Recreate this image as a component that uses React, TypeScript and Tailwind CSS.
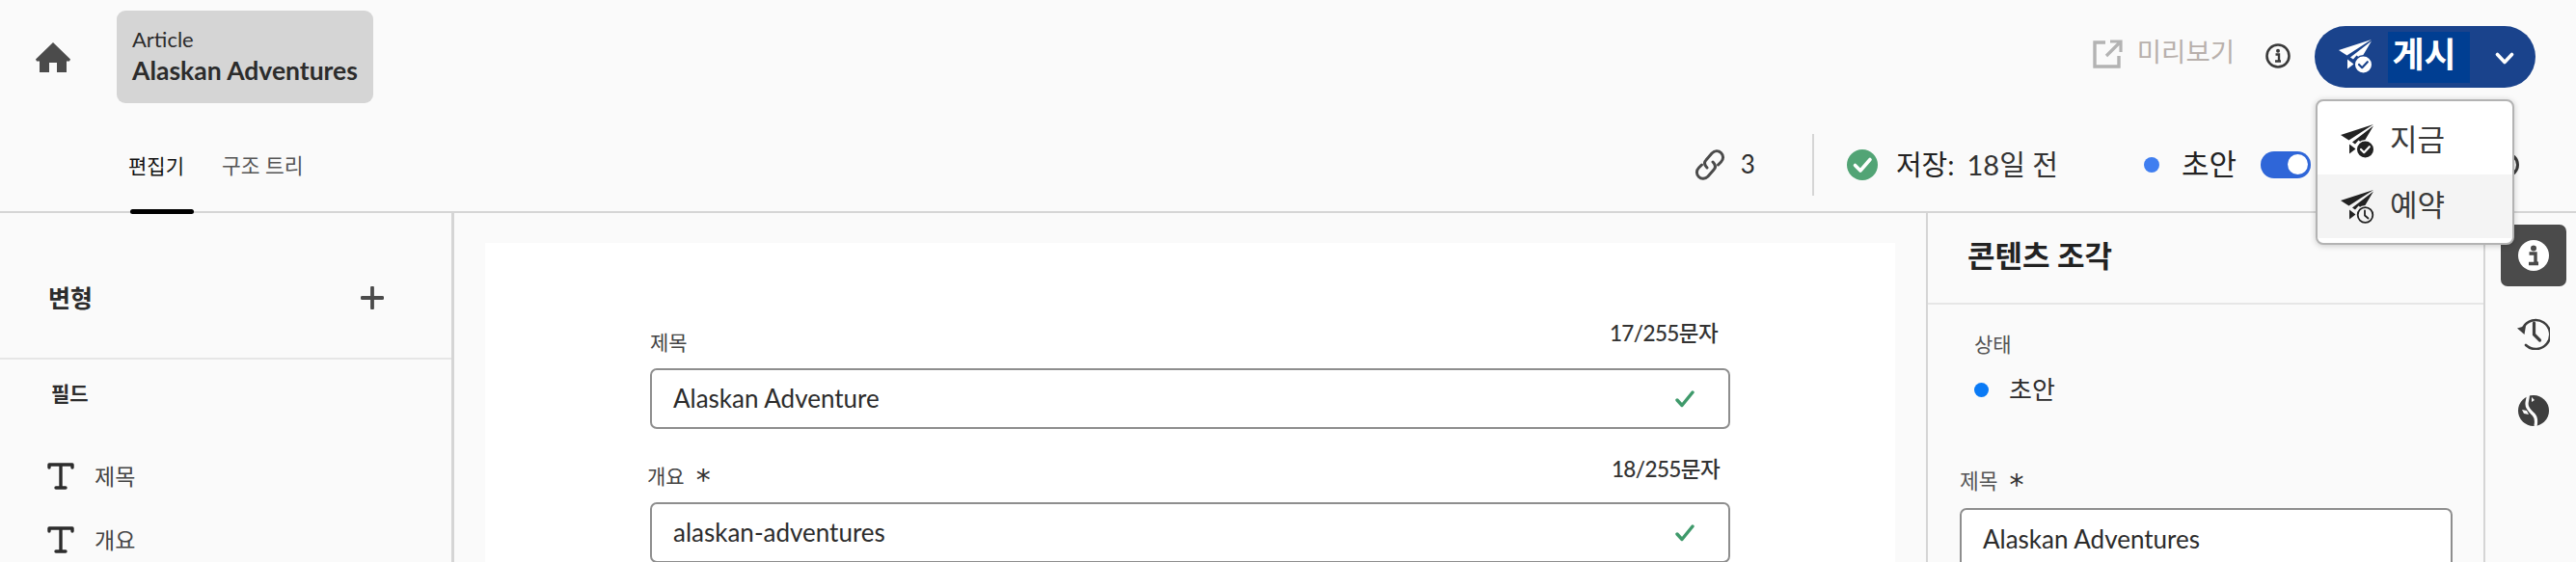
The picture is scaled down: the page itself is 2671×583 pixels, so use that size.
import React from "react";

const KR = "font-['Lato','Noto_Sans_CJK_KR',sans-serif]";

function Plane({ badge, color, bg }: { badge: "check" | "clock"; color: string; bg: string }) {
  return (
    <svg width="36" height="36" viewBox="0 0 36 36">
      <path d="M0 11 34 0 8.500 16.500z" fill={color} />
      <path d="M12 18.500 34 1.500 23 20 18.500 16.500 15 20.500z" fill={color} />
      <path d="M9 20.500 15.500 25.500 9 30.500z" fill={color} />
      {badge === "check" ? (
        <g>
          <circle cx="25.5" cy="26" r="10" fill={bg} />
          <circle cx="25.5" cy="26" r="8.5" fill={color} />
          <path d="M21 26l3.200 3.200 5.600-6" fill="none" stroke={bg} strokeWidth="2.200" strokeLinecap="round" strokeLinejoin="round" />
        </g>
      ) : (
        <g>
          <circle cx="25.5" cy="26" r="10" fill={bg} />
          <circle cx="25.5" cy="26" r="7.800" fill="none" stroke={color} strokeWidth="1.800" />
          <path d="M25 21.500v5l3.500 3" fill="none" stroke={color} strokeWidth="1.800" strokeLinecap="round" />
        </g>
      )}
    </svg>
  );
}

function TIcon() {
  return (
    <svg width="28" height="28" viewBox="0 0 28 28" className="shrink-0">
      <path d="M2 5V2h24v3M14 2v24M9 26h10" fill="none" stroke="#2c2c2c" strokeWidth="3.400" strokeLinecap="round" strokeLinejoin="round" />
    </svg>
  );
}

function Check() {
  return (
    <svg width="20" height="18" viewBox="0 0 20 18" className="shrink-0">
      <path d="M2 10l5 5.500L18 2" fill="none" stroke="#3f9a6b" strokeWidth="3.400" strokeLinecap="round" strokeLinejoin="round" />
    </svg>
  );
}

function Star() {
  return <span className="ml-[12px] text-[30px] leading-[24px] text-[#333] font-['DejaVu_Sans'] translate-y-[4px]">*</span>;
}

function Field({ label, star, count, value, countClass, labelClass }: { label: string; star?: boolean; count: string; value: string; countClass: string; labelClass: string }) {
  return (
    <div className="flex flex-col w-[1120px]">
      <div className="flex items-end justify-between h-[39px] pb-[15px]">
        <span className={`flex items-center text-[21px] leading-[24px] text-[#444] ${labelClass}`}>
          {label}
          {star && <Star />}
        </span>
        <span className={`text-[22.500px] leading-[24px] text-[#333] font-medium tracking-[-0.6px] ${countClass}`}>{count}</span>
      </div>
      <div className="h-[63px] border-2 border-[#8e8e8e] rounded-[7px] bg-white flex items-center justify-between pl-[22px] pr-[35px]">
        <span className="text-[26px] text-[#2c2c2c]">{value}</span>
        <Check />
      </div>
    </div>
  );
}

export default function App() {
  return (
    <div className={`relative w-[2671px] h-[583px] overflow-hidden bg-[#fafafa] flex flex-col ${KR}`}>
      {/* Top row */}
      <div className="h-[118px] shrink-0 flex items-start">
        <button className="ml-[37px] mt-[44px] w-[36px] h-[31px] shrink-0">
          <svg width="36" height="31" viewBox="0 0 36 31">
            <path d="M18 0 36 17.500 35 19.500H32V31H22V21H14V31H4V19.500H1L0 17.500z" fill="#4b4b4b" strokeLinejoin="round" />
          </svg>
        </button>
        <div className="ml-[48px] mt-[11px] w-[266px] h-[96px] rounded-[9px] bg-[#d5d5d5] flex flex-col justify-center pl-[16px] pb-[2px]">
          <div className="text-[22px] leading-[30px] text-[#2c2c2c]">Article</div>
          <div className="text-[26.500px] leading-[34px] font-bold text-[#2c2c2c] whitespace-nowrap">Alaskan Adventures</div>
        </div>
        <div className="ml-auto flex items-start">
          <div className="mt-[41px] flex items-center text-[#b3b3b3]">
            <svg width="31" height="30" viewBox="0 0 31 30">
              <path d="M13 3H2v25h25V17" fill="none" stroke="#b3b3b3" strokeWidth="3.400" />
              <path d="M14 17 28 3M18 2h11v11" fill="none" stroke="#b3b3b3" strokeWidth="3.200" />
            </svg>
            <span className="ml-[15px] text-[27.500px] leading-[28px] text-[#b8b0ac] -mt-[4px]">미리보기</span>
          </div>
          <svg className="ml-[32px] mt-[45px]" width="26" height="26" viewBox="0 0 26 26">
            <circle cx="13" cy="13" r="11.500" fill="none" stroke="#3a3a3a" strokeWidth="2.600" />
            <circle cx="13" cy="7.800" r="2" fill="#3a3a3a" />
            <path d="M10.500 11.500H14v7h2M10 18.500h6" fill="none" stroke="#3a3a3a" strokeWidth="2.400" />
          </svg>
          <div className="ml-[25px] mr-[42px] mt-[27px] w-[229px] h-[64px] rounded-full bg-[#1a438c] flex items-center pl-[25px]">
            <Plane badge="check" color="#ffffff" bg="#1a438c" />
            <span className="ml-[15px] w-[85px] h-[53px] bg-[#003e92] text-white text-[36px] leading-[46px] font-bold text-center pr-[10px]">게시</span>
            <svg className="ml-[26px] mt-[2px]" width="20" height="13" viewBox="0 0 20 13">
              <path d="M2.500 2.500 10 10.500 17.500 2.500" fill="none" stroke="#fff" strokeWidth="3.600" strokeLinecap="round" strokeLinejoin="round" />
            </svg>
          </div>
        </div>
      </div>

      {/* Tabs row */}
      <div className="h-[103px] shrink-0 border-b-2 border-[#d5d5d5] flex items-stretch">
        <div className="ml-[133px] relative flex">
          <div className="w-[68px] pt-[36px] text-[21px] leading-[36px] text-[#111] whitespace-nowrap">편집기</div>
          <div className="absolute left-[2px] bottom-[-3px] w-[66px] h-[5px] rounded-full bg-black" />
          <div className="ml-[29px] pt-[36px] text-[21.500px] leading-[36px] text-[#555]">구조 트리</div>
        </div>
        <div className="ml-auto flex items-center pt-[4px]">
          <svg width="34" height="34" viewBox="0 0 34 34">
            <g fill="none" stroke="#4b4b4b" strokeWidth="3" strokeLinecap="round">
              <path d="M14 20c-3-3-3-6-1-8l6-7c3-3 7-3 9.500-.5s3 6.500 0 9.500l-3 3" />
              <path d="M20 14c3 3 3 6 1 8l-6 7c-3 3-7 3-9.500.5s-3-6.500 0-9.500l3-3" />
            </g>
          </svg>
          <span className="ml-[15px] text-[26px] text-[#2c2c2c]">3</span>
          <div className="ml-[59px] w-[2px] h-[64px] bg-[#d5d5d5]" />
          <svg className="ml-[34px]" width="32" height="32" viewBox="0 0 32 32">
            <circle cx="16" cy="16" r="16" fill="#52a475" />
            <path d="M8.500 16.500 14 22 24 10.500" fill="none" stroke="#fff" strokeWidth="3.600" strokeLinecap="round" strokeLinejoin="round" />
          </svg>
          <span className="ml-[19px] text-[29px] text-[#222]">저장:</span>
          <span className="ml-[13px] text-[29px] text-[#333]">18일 전</span>
          <div className="ml-[89px] w-[16px] h-[16px] rounded-full bg-[#3f7ef0]" />
          <span className="ml-[23px] text-[31px] text-[#222]">초안</span>
          <div className="ml-[25px] w-[52px] h-[28px] rounded-full bg-[#2f66d8] flex items-center justify-end pr-[3px]">
            <div className="w-[21px] h-[21px] rounded-full bg-white" />
          </div>
          <div className="ml-[190px] mr-[59px] w-[26px] h-[26px] rounded-full border-[3px] border-[#3a3a3a]" />
        </div>
      </div>

      {/* Body */}
      <div className="flex-1 flex min-h-0">
        <aside className="w-[471px] shrink-0 border-r-[3px] border-[#d5d5d5] flex flex-col">
          <div className="h-[152px] shrink-0 border-b-2 border-[#e6e6e6] flex items-start justify-between pl-[50px] pr-[70px] pt-[71px]">
            <span className="text-[25px] leading-[34px] font-bold text-[#2c2c2c]">변형</span>
            <svg className="mt-[5px]" width="24" height="24" viewBox="0 0 24 24">
              <path d="M12 1.500v21M1.500 12h21" stroke="#4b4b4b" strokeWidth="3.800" strokeLinecap="round" />
            </svg>
          </div>
          <div className="pl-[53px] pt-[21px] text-[21px] leading-[28px] font-bold text-[#2c2c2c]">필드</div>
          <div className="pl-[49px] pt-[58px] flex flex-col gap-[38px]">
            <div className="h-[28px] flex items-center gap-[21px] text-[23px] leading-[28px] text-[#444]"><TIcon /><span>제목</span></div>
            <div className="h-[28px] flex items-center gap-[21px] text-[23px] leading-[28px] text-[#444]"><TIcon /><span>개요</span></div>
          </div>
        </aside>
        <main className="flex-1 min-w-0 pt-[31px] pl-[32px] pr-[32px]">
          <div className="h-full bg-white pl-[171px] pt-[91px] flex flex-col gap-[37px]">
            <Field label="제목" count="17/255문자" value="Alaskan Adventure" countClass="mr-[13px] -translate-y-[9px]" labelClass="" />
            <Field label="개요" star count="18/255문자" value="alaskan-adventures" countClass="mr-[11px] -translate-y-[7px]" labelClass="-ml-[3px]" />
          </div>
        </main>
        <aside className="w-[580px] shrink-0 border-l-[2px] border-r-[2px] border-[#d5d5d5] flex flex-col">
          <div className="h-[95px] shrink-0 border-b-[2px] border-[#e6e6e6] pl-[41px] pt-[23px] text-[31px] leading-[42px] font-bold text-[#222]">콘텐츠 조각</div>
          <div className="pl-[48px] pt-[27px] text-[21px] leading-[28px] text-[#555]">상태</div>
          <div className="pl-[48px] pt-[17px] flex items-center">
            <div className="w-[15px] h-[15px] rounded-full bg-[#0a7af5]" />
            <span className="ml-[21px] text-[26px] leading-[32px] text-[#2c2c2c]">초안</span>
          </div>
          <div className="pl-[33px] pt-[65px] text-[21.500px] leading-[28px] text-[#555] flex items-center">
            제목<Star />
          </div>
          <div className="ml-[33px] mt-[14px] w-[511px] h-[63px] shrink-0 border-2 border-[#8e8e8e] rounded-[7px] bg-white flex items-center pl-[22px] pt-[2px] text-[26px] text-[#2c2c2c]">Alaskan Adventures</div>
        </aside>
        <nav className="w-[94px] shrink-0 pt-[12px] pl-[16px]">
          <div className="w-[68px] flex flex-col items-center">
            <div className="w-[68px] h-[64px] rounded-[7px] bg-[#4b4b4b] flex items-center justify-center">
              <svg width="32" height="32" viewBox="0 0 32 32">
                <circle cx="16" cy="16" r="16" fill="#fff" />
                <circle cx="16" cy="8.500" r="3" fill="#4b4b4b" />
                <path d="M11.500 14h6.500v10h2.500M11 24.500h10" fill="none" stroke="#4b4b4b" strokeWidth="3.400" />
              </svg>
            </div>
            <svg className="mt-[32px]" width="34" height="34" viewBox="0 0 34 34">
              <path d="M6 11A15 15 0 1 1 9 29" fill="none" stroke="#3e3e3e" strokeWidth="2.600" strokeLinecap="round" />
              <path d="M0 11.500 9 9 7.500 18z" fill="#3e3e3e" />
              <path d="M17.500 6v12l6 6" fill="none" stroke="#3e3e3e" strokeWidth="3.200" strokeLinecap="round" />
            </svg>
            <svg className="mt-[46px]" width="32" height="34" viewBox="0 0 32 34">
              <circle cx="16" cy="17" r="16" fill="#3e3e3e" />
              <path d="M10 0c1 3 -1 6 -1 10 0 5 4 8 7 11 3 3 3 7 2 12" fill="none" stroke="#fafafa" strokeWidth="3.200" />
              <path d="M14 3l3 3-3 2zM4 16l5 1 2 4-5-1z" fill="#fafafa" />
            </svg>
          </div>
        </nav>
      </div>

      {/* Publish dropdown */}
      <div className="absolute left-[2401px] top-[103px] w-[206px] h-[151px] rounded-[8px] border-[2px] border-[#b3b3b3] bg-white shadow-[0_1px_6px_rgba(0,0,0,0.2)] overflow-hidden pt-[24px] z-10">
        <div className="flex items-center h-[36px] pl-[24px] text-[#333]">
          <Plane badge="check" color="#222" bg="#fff" />
          <span className="ml-[15px] text-[31px] leading-[40px] text-[#3a3a3a] -translate-y-[3px]">지금</span>
        </div>
        <div className="mt-[16px] h-[66px] bg-[#f4f4f4] flex items-center pl-[24px] pt-[2px]">
          <Plane badge="clock" color="#222" bg="#f4f4f4" />
          <span className="ml-[15px] text-[31px] leading-[40px] text-[#3a3a3a] -translate-y-[3px]">예약</span>
        </div>
      </div>
    </div>
  );
}
